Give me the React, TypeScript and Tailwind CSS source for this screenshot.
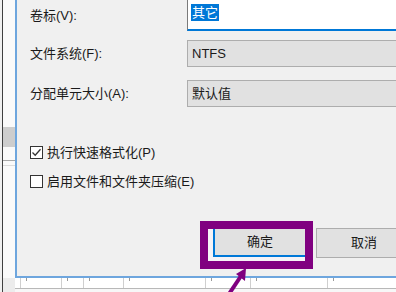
import React from 'react';

const font = { fontFamily: '"Liberation Sans", "Noto Sans CJK SC", sans-serif' };

function Field({ label, children, top }: { label: string; children: React.ReactNode; top?: boolean }) {
  return (
    <div className={`flex items-center ${top ? 'h-[31px]' : 'h-[27px]'}`}>
      <div className="w-[170px] pl-[13px] text-[13px] text-[#1a1a1a]">{label}</div>
      {children}
    </div>
  );
}

function Check({ checked, label }: { checked?: boolean; label: string }) {
  return (
    <div className="flex items-center h-[13px] pl-[13px] gap-[4px]">
      <div className="w-[13px] h-[13px] border border-[#333] bg-white flex items-center justify-center">
        {checked && (
          <svg width="11" height="11" viewBox="0 0 11 11">
            <path d="M1.5 5.5 L4.2 8.2 L9.5 2.2" fill="none" stroke="#333" strokeWidth="1.3" />
          </svg>
        )}
      </div>
      <span className="text-[13px] text-[#1a1a1a]">{label}</span>
    </div>
  );
}

export default function App() {
  const ticks = [20, 61, 83, 123, 205, 250, 327];
  return (
    <div className="relative w-[396px] h-[292px] overflow-hidden bg-[#f7f7f7]" style={font}>
      <div className="flex h-[278px]">
        {/* left strip of the window behind */}
        <div className="w-[15px] flex flex-col border-l-[2px] border-l-[#f0f0f0]">
          <div className="flex-1 border-l border-[#404040] flex flex-col bg-[#fafafa]">
            <div className="h-[127px]" />
            <div className="h-[20px] bg-[#cdcdcd]" />
            <div className="h-[13px]" />
            <div className="h-[1px] bg-[#a8a8a8]" />
            <div className="h-[4px]" />
            <div className="h-[1px] bg-[#dcdcdc]" />
          </div>
        </div>

        {/* dialog */}
        <div className="flex-1 bg-[#f0f0f0] border-l-[2px] border-b-[2px] border-[#6ea6de] flex flex-col">
          <Field label="卷标(V):" top>
            <div className="flex-1 h-[31px] bg-white border-l border-l-[#7a7a7a] border-b-[2px] border-b-[#0078d7] flex items-center pl-[3px] pb-[4px]">
              <span className="bg-[#0078d7] text-white text-[13px] leading-[17px] px-[1px]">其它</span>
            </div>
          </Field>
          <div className="h-[9px]" />
          <Field label="文件系统(F):">
            <div className="flex-1 h-[27px] bg-[#e1e1e1] border border-[#adadad] border-r-0 flex items-center pl-[4px] text-[13px] text-[#1a1a1a]">
              NTFS
            </div>
          </Field>
          <div className="h-[13px]" />
          <Field label="分配单元大小(A):">
            <div className="flex-1 h-[27px] bg-[#e1e1e1] border border-[#adadad] border-r-0 flex items-center pl-[4px] text-[13px] text-[#1a1a1a]">
              默认值
            </div>
          </Field>
          <div className="h-[39px]" />
          <Check checked label="执行快速格式化(P)" />
          <div className="h-[16px]" />
          <Check label="启用文件和文件夹压缩(E)" />
          <div className="h-[33px]" />

          {/* buttons */}
          <div className="flex items-start pl-[183px]">
            <div className="border-[8px] border-[#800080] bg-[#f6f3f6] pl-[5px] pb-[4px] w-[113px] h-[48px]">
              <div className="h-[28px] bg-[#e1e1e1] border-l-[2px] border-b-[2px] border-[#0078d7] flex items-center justify-center text-[13px] text-[#1a1a1a]">
                确定
              </div>
            </div>
            <div className="ml-[3px] mt-[7px] flex-1 h-[30px] bg-[#e1e1e1] border border-[#adadad] border-r-0 flex items-center pl-[34px] text-[13px] text-[#1a1a1a]">
              取消
            </div>
          </div>
        </div>
      </div>

      {/* strip below the dialog */}
      <div className="flex h-[14px]">
        <div className="w-[15px] border-l-[2px] border-l-[#f0f0f0]">
          <div className="h-full border-l border-[#404040] bg-[#ececec]" />
        </div>
        <div className="flex-1 relative bg-white border-b border-[#b8b8b8] mb-[3px]">
          {ticks.map((x) => (
            <div key={x} className="absolute top-0 bottom-0 border-l border-[#cfcfcf]" style={{ left: x - 15 }}>
              <div className="absolute left-[5px] top-0 h-[3px] border-l border-[#9a9a9a]" />
            </div>
          ))}
        </div>
      </div>

      {/* annotation arrow */}
      <svg className="absolute left-0 top-0 pointer-events-none" width="396" height="292" viewBox="0 0 396 292">
        <path d="M229 294 L241 276" stroke="#800080" strokeWidth="4" fill="none" />
        <path d="M246 268 L236 274 L245 281 Z" fill="#800080" />
      </svg>
    </div>
  );
}
